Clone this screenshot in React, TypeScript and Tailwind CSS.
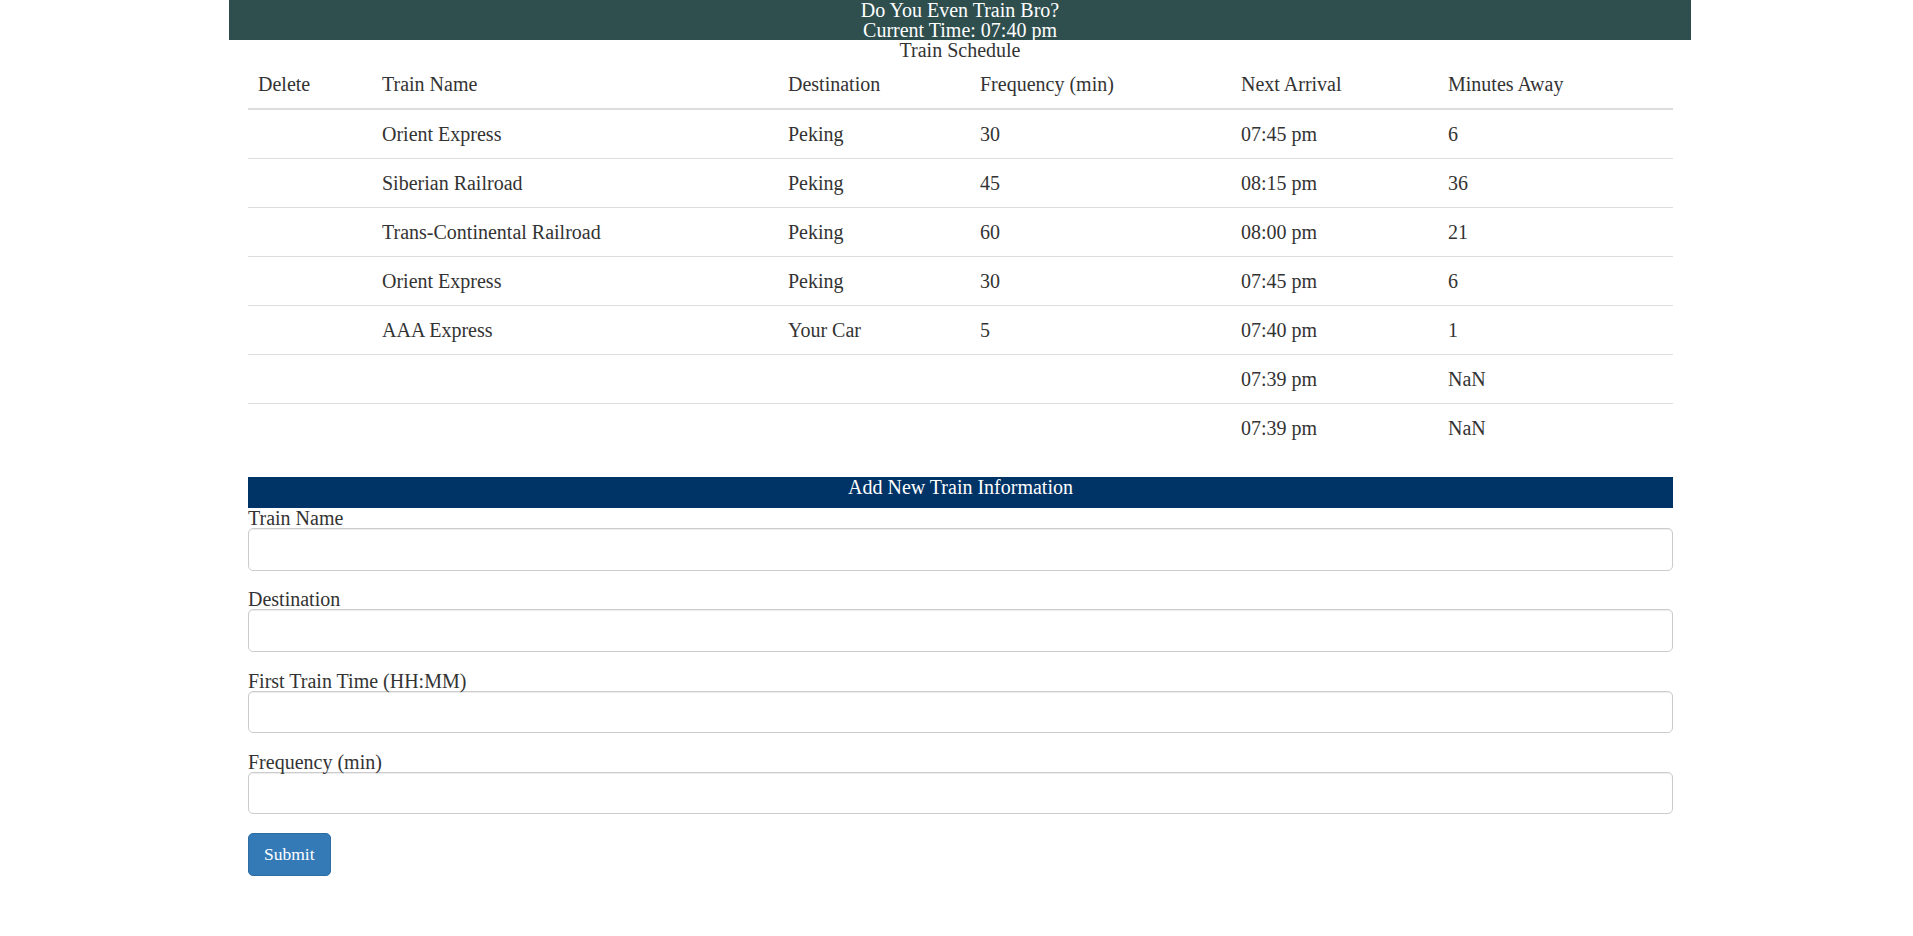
import React from 'react';

type Train = {
  name: string;
  destination: string;
  frequency: string;
  next: string;
  away: string;
};

const trains: Train[] = [
  { name: 'Orient Express', destination: 'Peking', frequency: '30', next: '07:45 pm', away: '6' },
  { name: 'Siberian Railroad', destination: 'Peking', frequency: '45', next: '08:15 pm', away: '36' },
  { name: 'Trans-Continental Railroad', destination: 'Peking', frequency: '60', next: '08:00 pm', away: '21' },
  { name: 'Orient Express', destination: 'Peking', frequency: '30', next: '07:45 pm', away: '6' },
  { name: 'AAA Express', destination: 'Your Car', frequency: '5', next: '07:40 pm', away: '1' },
  { name: '', destination: '', frequency: '', next: '07:39 pm', away: 'NaN' },
  { name: '', destination: '', frequency: '', next: '07:39 pm', away: 'NaN' },
];

const headers = ['Delete', 'Train Name', 'Destination', 'Frequency (min)', 'Next Arrival', 'Minutes Away'];
const fields = ['Train Name', 'Destination', 'First Train Time (HH:MM)', 'Frequency (min)'];

export default function App() {
  return (
    <div className="min-h-screen bg-white font-['Liberation_Serif','Times_New_Roman',serif] text-[20px] text-[#333]">
      <div className="ml-[229px] w-[1462px]">
        {/* title bar */}
        <div className="h-[40px] bg-[#2f4f4f] text-center leading-[20px] text-white">
          <div>Do You Even Train Bro?</div>
          <div>Current Time: 07:40 pm</div>
        </div>
        <div className="text-center leading-[20px]">Train Schedule</div>

        <div className="pl-[19px] pr-[18px]">
          <table className="mb-[25px] w-full table-fixed">
            <colgroup>
              <col className="w-[124px]" />
              <col className="w-[406px]" />
              <col className="w-[192px]" />
              <col className="w-[261px]" />
              <col className="w-[207px]" />
              <col className="w-[235px]" />
            </colgroup>
            <thead>
              <tr>
                {headers.map((h) => (
                  <th
                    key={h}
                    className="border-b-[2.5px] border-[#ddd] px-[10px] py-[10px] text-left font-normal leading-[28px]"
                  >
                    {h}
                  </th>
                ))}
              </tr>
            </thead>
            <tbody>
              {trains.map((t, i) => (
                <tr key={i}>
                  <td className="border-t border-[#ddd] px-[10px] py-[10px] leading-[28px]"></td>
                  <td className="border-t border-[#ddd] px-[10px] py-[10px] leading-[28px]">{t.name}</td>
                  <td className="border-t border-[#ddd] px-[10px] py-[10px] leading-[28px]">{t.destination}</td>
                  <td className="border-t border-[#ddd] px-[10px] py-[10px] leading-[28px]">{t.frequency}</td>
                  <td className="border-t border-[#ddd] px-[10px] py-[10px] leading-[28px]">{t.next}</td>
                  <td className="border-t border-[#ddd] px-[10px] py-[10px] leading-[28px]">{t.away}</td>
                </tr>
              ))}
            </tbody>
          </table>

          {/* add form */}
          <div className="h-[31px] bg-[#003366] text-center leading-[20px] text-white">
            Add New Train Information
          </div>
          <form onSubmit={(e) => e.preventDefault()}>
            {fields.map((f) => (
              <div key={f} className="mb-[18.75px]">
                <label className="block leading-[20px]">{f}</label>
                <input
                  type="text"
                  className="block h-[42.5px] w-full rounded-[5px] border border-[#ccc] bg-white px-[15px] shadow-[inset_0_1px_1px_rgba(0,0,0,0.075)] outline-none"
                />
              </div>
            ))}
            <button
              type="submit"
              className="h-[42.5px] rounded-[5px] border border-[#2e6da4] bg-[#337ab7] px-[15px] text-[17.5px] leading-[25px] text-white"
            >
              Submit
            </button>
          </form>
        </div>
      </div>
    </div>
  );
}
